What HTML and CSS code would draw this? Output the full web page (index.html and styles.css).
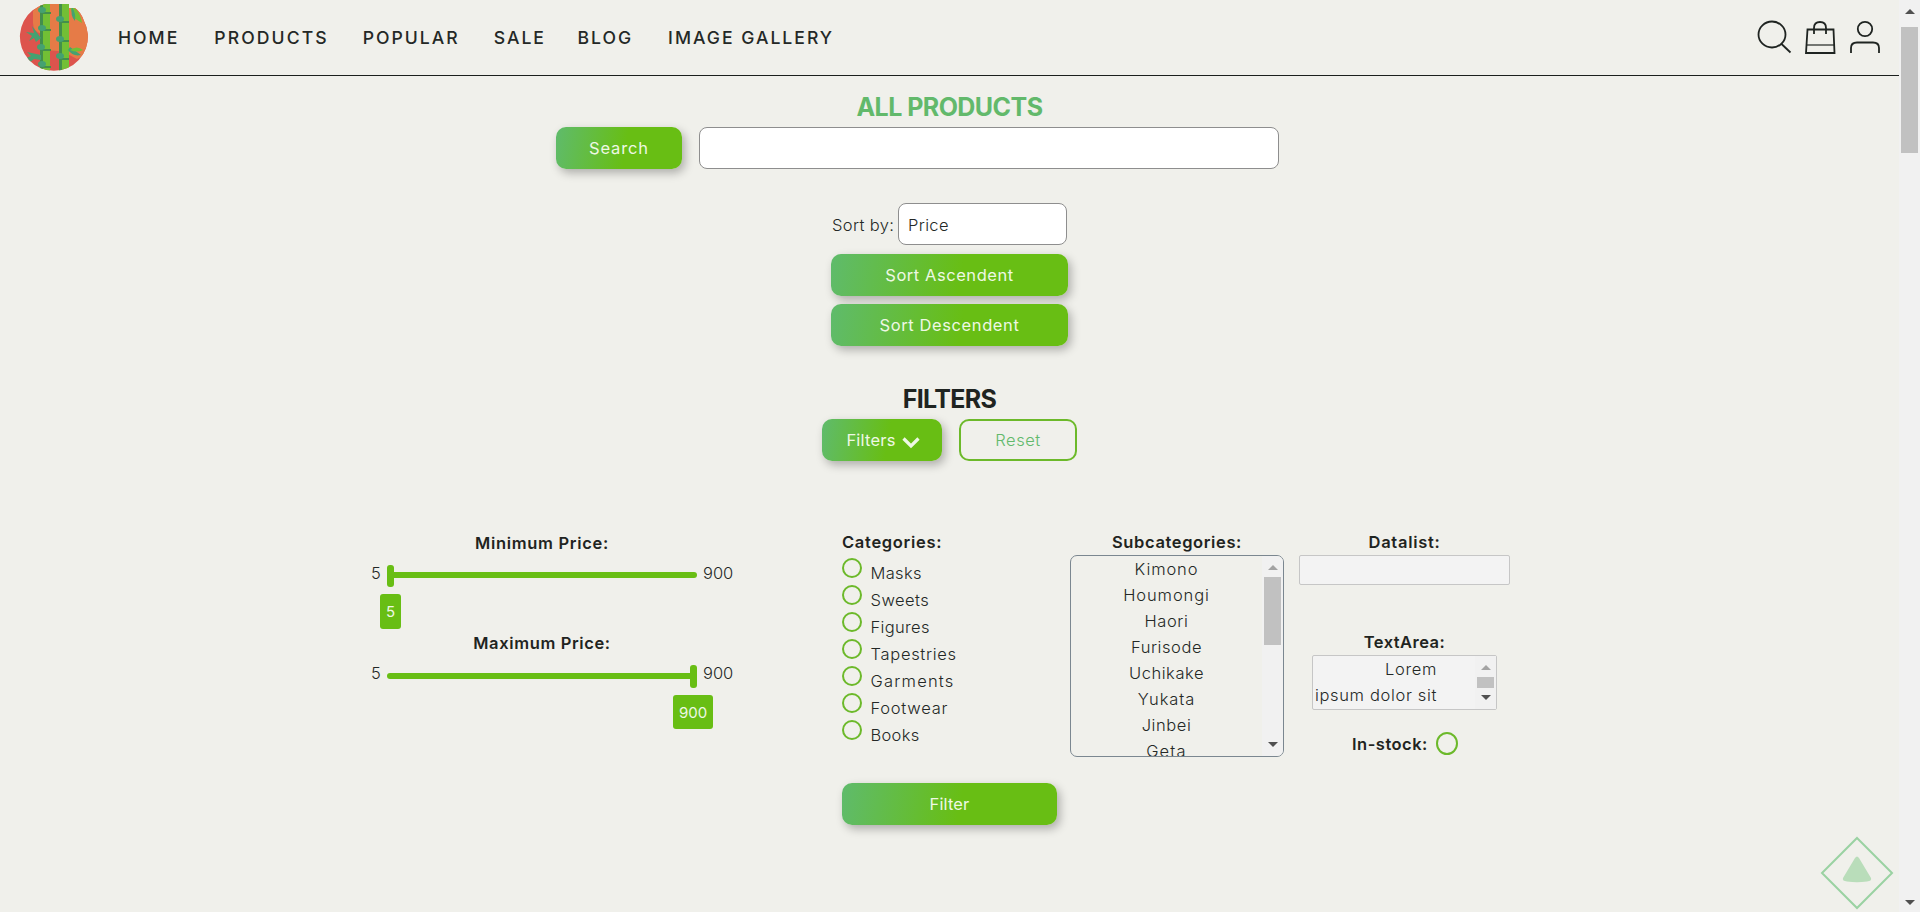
FILE: index.html
```html
<!DOCTYPE html>
<html lang="en">
<head>
<meta charset="utf-8">
<title>All products</title>
<link rel="stylesheet" href="styles.css">
</head>
<body>
<div class="page">
  <header class="header">
    <svg class="logo" width="70" height="70" viewBox="0 0 70 70">
      <defs><clipPath id="disc"><path d="M26 1H50V5H56Q62 9 65 18A34 34 0 1 1 26 1Z"/></clipPath></defs>
      <g clip-path="url(#disc)">
        <rect width="70" height="70" fill="#dd544d"/>
        <path d="M14 8V20Q14 28 22 31V50Q36 43 58 56L72 49V0H22Z" fill="#e67b47"/>
        <path d="M51 4Q60 4 63 20L55 15Z" fill="#72bf35"/>
        <path d="M21 0h10v70H21zM40 0h10v70H40z" fill="#72bf35"/>
        <path d="M21 0h3v70h-3zM40 0h3v70h-3zM21 9h11v2H21zM21 26h11v2H21zM21 46h11v2H21zM21 63h11v2H21zM40 18h10v2H40zM40 37h10v2H40zM40 55h10v2H40z" fill="#438f4b"/>
        <g fill="#45a171"><ellipse cx="23" cy="7" rx="4" ry="3"/><ellipse cx="23" cy="25" rx="4" ry="3"/><ellipse cx="22" cy="44" rx="4" ry="3"/><ellipse cx="23" cy="61" rx="4" ry="3"/><ellipse cx="41" cy="16" rx="4" ry="3"/><ellipse cx="41" cy="36" rx="4" ry="3"/><ellipse cx="41" cy="53" rx="4" ry="3"/>
        <path d="M22 35L13 23L15 30L7 29L13 33L10 38L15 35L17 39Z"/><path d="M22 52L8 49L12 53L5 56L10 60L15 56L22 57Z"/><path d="M53 4Q57 10 56 18Q51 13 53 4Z"/><path d="M51 44L62 52Q54 54 49 47Z"/></g>
        <path d="M51 47Q58 42 64 47Q58 50 51 47Z" fill="#72bf35"/>
      </g>
    </svg>
    <nav class="nav">
      <a class="n1">HOME</a><a class="n2">PRODUCTS</a><a class="n3">POPULAR</a><a class="n4">SALE</a><a class="n5">BLOG</a><a class="n6">IMAGE GALLERY</a>
    </nav>
    <svg class="icons" width="126" height="36" viewBox="0 0 126 36" fill="none" stroke="#1f2421" stroke-width="1.8">
      <ellipse cx="16" cy="15.500" rx="13.500" ry="13"/><path d="M25 24.500L34.500 33.500"/>
      <path d="M51.500 10.500H77.500L78.500 34H50Z"/><path d="M50.500 26H78.500" stroke-width="1.200"/><path d="M50 34H79" stroke-width="2"/><path d="M58 15V9Q58 3 64 3Q70 3 70 9V15"/>
      <circle cx="109" cy="10" r="7.200"/><path d="M95 34V29Q95 23.500 101 23.500H117Q123 23.500 123 29V34"/>
    </svg>
  </header>

  <main class="main">
    <h2 class="title"><span>ALL PRODUCTS</span></h2>
    <div class="search">
      <button class="btn b-search"><span>Search</span></button>
      <div class="field"></div>
    </div>
    <div class="sort">
      <div class="sort-row"><span class="sort-label">Sort by:</span><div class="select"><span>Price</span></div></div>
      <button class="btn b-asc"><span>Sort Ascendent</span></button>
      <button class="btn b-desc"><span>Sort Descendent</span></button>
    </div>
    <h2 class="title dark"><span>FILTERS</span></h2>
    <div class="toggle">
      <button class="btn b-filters"><span>Filters</span><svg width="18" height="12" viewBox="0 0 18 12" fill="none" stroke="#eef8e4" stroke-width="3.200"><path d="M1.500 1.500L9 9L16.500 1.500"/></svg></button>
      <button class="btn outline"><span>Reset</span></button>
    </div>

    <form class="filters">
      <div class="prices">
        <div class="price">
          <label class="lbl l-min"><span>Minimum Price:</span></label>
          <div class="range min"><span class="five">5</span><div class="track"><i class="thumb"></i><b class="bubble"><span>5</span></b></div><span class="nine">900</span></div>
        </div>
        <div class="price">
          <label class="lbl l-max"><span>Maximum Price:</span></label>
          <div class="range max"><span class="five">5</span><div class="track"><i class="thumb"></i><b class="bubble"><span>900</span></b></div><span class="nine">900</span></div>
        </div>
      </div>
      <div class="cats">
        <label class="lbl l-cat"><span>Categories:</span></label>
        <div class="cat"><i></i><span class="c1">Masks</span></div>
        <div class="cat"><i></i><span class="c2">Sweets</span></div>
        <div class="cat"><i></i><span class="c3">Figures</span></div>
        <div class="cat"><i></i><span class="c4">Tapestries</span></div>
        <div class="cat"><i></i><span class="c5">Garments</span></div>
        <div class="cat"><i></i><span class="c6">Footwear</span></div>
        <div class="cat"><i></i><span class="c7">Books</span></div>
      </div>
      <div class="subs">
        <label class="lbl l-sub"><span>Subcategories:</span></label>
        <div class="list">
          <div class="options"><span class="o1">Kimono</span><span class="o1">Houmongi</span><span class="o2">Haori</span><span class="o2">Furisode</span><span class="o2">Uchikake</span><span class="o1">Yukata</span><span class="o2">Jinbei</span><span class="o3">Geta</span></div>
          <div class="bar"><i class="up soft"></i><i class="grip"></i><i class="down"></i></div>
        </div>
      </div>
      <div class="extra">
        <label class="lbl l-data"><span>Datalist:</span></label>
        <div class="datalist"></div>
        <label class="lbl l-text"><span>TextArea:</span></label>
        <div class="textarea">
          <div class="lines"><span>Lorem</span><span>ipsum dolor sit</span></div>
          <div class="bar"><i class="up soft"></i><i class="grip"></i><i class="down"></i></div>
        </div>
        <div class="stock"><label class="lbl l-stock"><span>In-stock:</span></label><i></i></div>
      </div>
    </form>
    <button class="btn b-filter"><span>Filter</span></button>
  </main>
  <svg class="to-top" width="74" height="74" viewBox="0 0 74 74"><path d="M37 2L72 37L37 72L2 37Z" fill="none" stroke="#9ad2a2" stroke-width="2"/><path d="M35 22Q37 19 39 22L51 42Q52 45 47 45.500Q37 47 27 45.500Q22 45 23 42Z" fill="#b9ddba"/></svg>
</div>
<div class="bar window-bar"><i class="up"></i><i class="grip"></i><i class="down"></i></div>
</body>
</html>
```
FILE: styles.css
```css
* { box-sizing: border-box; }
body {
  margin: 0;
  display: flex;
  width: 1920px;
  height: 912px;
  overflow: hidden;
  background: #f0f0eb;
  color: #242826;
  font: 350 16.5px/24px Inter, "Noto Sans", sans-serif;
}
.page { position: relative; width: 1899px; height: 912px; }
.header {
  display: flex;
  align-items: center;
  height: 76px;
  padding: 0 17px 0 19px;
  border-bottom: 1px solid #1b1f1d;
}
.logo { flex: none; }
.nav { display: flex; gap: 34px; margin-left: 29px; font-size: 17.6px; font-weight: 500; letter-spacing: 2px; }
.nav a { white-space: nowrap; }
.n2 { margin-left: 1px; letter-spacing: 2.1px; }
.n5 { margin-left: -2.5px; }
.n6 { margin-left: 1px; }
.icons { margin: 0 0 1px auto; }

.main { display: flex; flex-direction: column; align-items: center; padding-top: 13px; }
.title { height: 38px; margin: 0; padding-top: 3px; font-size: 25px; line-height: 30px; font-weight: 700; letter-spacing: -.55px; color: #62b96b; }
.title.dark { margin-top: 35px; letter-spacing: -.65px; color: #1f2421; }
.btn {
  display: flex;
  align-items: center;
  justify-content: center;
  height: 42px;
  padding: 0;
  border: 0;
  border-radius: 10px;
  background: linear-gradient(100deg, #5fbb6c 0%, #68be14 55%);
  box-shadow: 3px 4px 10px rgba(0, 0, 0, .28);
  color: #eef8e4;
  font: 400 16.5px/24px Inter, sans-serif;
}
.search { display: flex; gap: 17px; width: 723px; margin-right: 64px; }
.b-search { flex: none; width: 126px; letter-spacing: .87px; }
.field { flex: none; width: 580px; height: 42px; border: 1px solid #8e8e8e; border-radius: 8px; background: #fff; }
.sort { display: flex; flex-direction: column; width: 237px; margin-top: 34px; }
.sort-row { display: flex; align-items: center; height: 42px; margin-bottom: 9px; padding-left: 1px; letter-spacing: .35px; }
.sort-label { width: 66px; white-space: nowrap; padding-top: 2px; }
.select { width: 169px; height: 42px; padding: 9px 9px; border: 1px solid #8e8e8e; border-radius: 8px; background: #fff; }
.b-asc { letter-spacing: .55px; }
.b-desc { margin-top: 8px; letter-spacing: .6px; }
.toggle { display: flex; gap: 17px; width: 255px; }
.b-filters { width: 120px; gap: 6px; padding-left: 2px; letter-spacing: .2px; }
.b-filters svg { margin-top: 6px; }
.btn.outline { width: 118px; border: 2px solid #6cb92a; background: none; box-shadow: none; color: #62b96b; font-weight: 350; letter-spacing: .5px; }

.filters {
  display: grid;
  grid-template-columns: 471px 228px 229px 211px;
  width: 1139px;
  height: 228px;
  margin: 69px 0 0 -18px;
}
.lbl { display: block; height: 25px; text-align: center; font-weight: 600; letter-spacing: .7px; color: #1f2421; white-space: nowrap; }
.prices { width: 364px; }
.prices .lbl { width: 342px; }
.price { height: 100px; padding-top: 1px; }
.range { display: flex; align-items: center; height: 34px; }
.five { width: 16px; }
.track { position: relative; width: 310px; height: 6px; margin: 3px 6px 0 0; border-radius: 3px; background: #68be14; }
.max .track { margin-top: 5px; }
.thumb { position: absolute; left: 0; top: -7px; width: 7px; height: 22px; border-radius: 3px; background: #68be14; }
.max .thumb { left: auto; right: 0; top: -8px; height: 23px; }
.bubble { position: absolute; left: -7px; top: 22px; width: 21px; height: 35px; border-radius: 3px; background: #68be14; color: #eef8e4; font: 400 15px/35px Inter, sans-serif; text-align: center; }
.max .bubble { left: 286px; width: 40px; height: 34px; }
.prices .l-max { letter-spacing: .63px; }
.l-cat { height: 26px; text-align: left; }
.cat { display: flex; gap: 9px; height: 27px; padding-top: 2px; }
.cat i { width: 20px; height: 20px; border: 2px solid #6cb92a; border-radius: 50%; }
.cat span { padding-top: 3px; margin-left: -.5px; }
.c1, .c3 { letter-spacing: .35px; }
.c2 { letter-spacing: .45px; }
.c4 { letter-spacing: .7px; }
.c5 { letter-spacing: 1.2px; }
.c6 { letter-spacing: .75px; }
.c7 { letter-spacing: .3px; }
.subs { width: 214px; }
.l-sub { letter-spacing: .62px; }
.list { display: flex; height: 202px; border: 1px solid #7b8790; border-radius: 7px; overflow: hidden; }
.options { display: flex; flex: 1; flex-direction: column; align-items: center; line-height: 26px; overflow: hidden; }
.options span { flex: none; }
.o1 { letter-spacing: .9px; }
.o2 { letter-spacing: .55px; }
.o3 { letter-spacing: 1.2px; }
.bar { display: flex; flex-direction: column; align-items: center; width: 21px; background: #f1f1f1; }
.up, .down { border: 5px solid transparent; border-top: 0; border-bottom: 5px solid #505050; }
.down { margin-top: auto; border-top: 5px solid #505050; border-bottom: 0; }
.soft { border-bottom-color: #a3a3a3; }
.grip { width: 17px; background: #c1c1c1; }
.list .up { margin-top: 9px; }
.list .grip { height: 68px; margin-top: 7px; }
.list .down { margin-bottom: 9px; }
.datalist { height: 30px; margin-bottom: 45px; border: 1px solid #c6c6c6; border-radius: 2px; background: #f3f3f3; }
.l-text { letter-spacing: .45px; }
.textarea { display: flex; width: 185px; height: 55px; margin-left: 13px; border: 1px solid #c6c6c6; border-radius: 2px; background: #f3f3f3; }
.lines { display: flex; flex-direction: column; align-items: flex-end; width: 124px; margin-right: auto; line-height: 26px; letter-spacing: .65px; white-space: nowrap; }
.textarea .up { margin-top: 9px; }
.textarea .grip { height: 11px; margin-top: 7px; }
.textarea .down { margin-bottom: 9px; }
.stock { display: flex; gap: 9px; margin: 22px 0 0 53px; }
.stock .lbl { width: 75px; letter-spacing: .5px; }
.stock i { width: 22px; height: 23px; border: 2px solid #6cb92a; border-radius: 50%; }
.b-filter { width: 215px; margin-top: 25px; letter-spacing: .15px; }
.to-top { position: absolute; left: 1820px; top: 836px; }
.window-bar .up { margin-top: 9px; }
.window-bar .grip { height: 126px; margin-top: 13px; }
.window-bar .down { margin-bottom: 7px; }
```
